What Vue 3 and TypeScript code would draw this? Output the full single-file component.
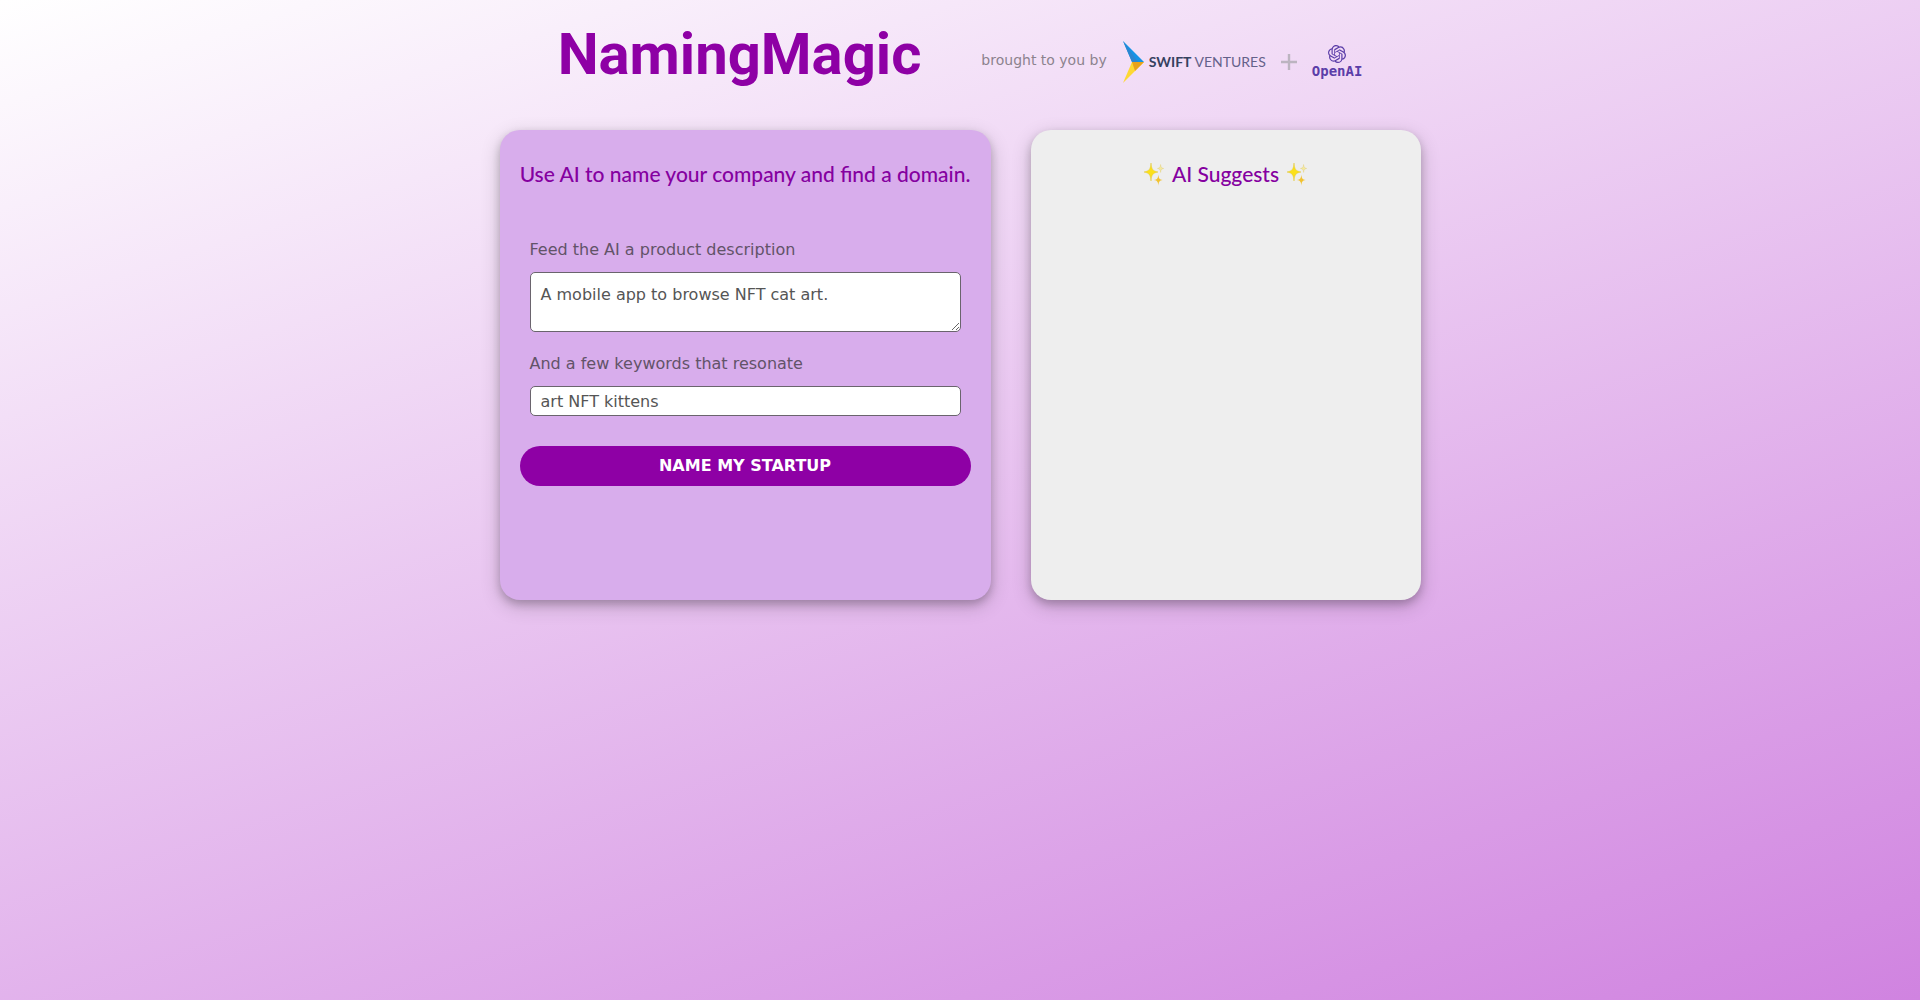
<script setup lang="ts">
import { ref } from 'vue'

const description = ref('A mobile app to browse NFT cat art.')
const keywords = ref('art NFT kittens')
const sparkle = 'M7 0C7.600 6 8.500 8 14 9C8.500 10 7.600 12 7 18C6.400 12 5.500 10 0 9C5.500 8 6.400 6 7 0Z'
</script>

<template>
  <div class="page">
    <header class="header">
      <h1 class="title">NamingMagic</h1>
      <div class="sponsors">
        <span class="by">brought to you by</span>
        <a class="swift" href="#" aria-label="Swift Ventures">
          <svg width="21" height="42" viewBox="0 0 21 42" aria-hidden="true">
            <path d="M0 0L21 21H9Z" fill="#1593e6" />
            <path d="M0 0L15 21H9Z" fill="#2b86d0" />
            <path d="M9 21H21L0 42Z" fill="#fdd835" />
            <path d="M9 21H21L12 30Z" fill="#e8a21c" />
          </svg>
          <span class="swift-name"><b>SWIFT</b><span>VENTURES</span></span>
        </a>
        <svg class="plus" width="16" height="16" viewBox="0 0 16 16" aria-hidden="true">
          <path d="M8 0V16M0 8H16" stroke="#bcb4c0" stroke-width="2.400" />
        </svg>
        <a class="openai" href="#">
          <svg width="18" height="18" viewBox="0 0 24 24" fill="#5b3da8" aria-hidden="true">
            <path d="M22.2819 9.8211a5.9847 5.9847 0 0 0-.5157-4.9108 6.0462 6.0462 0 0 0-6.5098-2.9A6.0651 6.0651 0 0 0 4.9807 4.1818a5.9847 5.9847 0 0 0-3.9977 2.9 6.0462 6.0462 0 0 0 .7427 7.0966 5.98 5.98 0 0 0 .511 4.9107 6.051 6.051 0 0 0 6.5146 2.9001A5.9847 5.9847 0 0 0 13.2599 24a6.0557 6.0557 0 0 0 5.7718-4.2058 5.9894 5.9894 0 0 0 3.9977-2.9001 6.0557 6.0557 0 0 0-.7475-7.0729zm-9.022 12.6081a4.4755 4.4755 0 0 1-2.8764-1.0408l.1419-.0804 4.7783-2.7582a.7948.7948 0 0 0 .3927-.6813v-6.7369l2.02 1.1686a.071.071 0 0 1 .038.052v5.5826a4.504 4.504 0 0 1-4.4945 4.4944zm-9.6607-4.1254a4.4708 4.4708 0 0 1-.5346-3.0137l.142.0852 4.783 2.7582a.7712.7712 0 0 0 .7806 0l5.8428-3.3685v2.3324a.0804.0804 0 0 1-.0332.0615L9.74 19.9502a4.4992 4.4992 0 0 1-6.1408-1.6464zM2.3408 7.8956a4.485 4.485 0 0 1 2.3655-1.9728V11.6a.7664.7664 0 0 0 .3879.6765l5.8144 3.3543-2.0201 1.1685a.0757.0757 0 0 1-.071 0l-4.8303-2.7865A4.504 4.504 0 0 1 2.3408 7.872zm16.5963 3.8558L13.1038 8.364 15.1192 7.2a.0757.0757 0 0 1 .071 0l4.8303 2.7913a4.4944 4.4944 0 0 1-.6765 8.1042v-5.6772a.79.79 0 0 0-.407-.667zm2.0107-3.0231l-.142-.0852-4.7735-2.7818a.7759.7759 0 0 0-.7854 0L9.409 9.2297V6.8974a.0662.0662 0 0 1 .0284-.0615l4.8303-2.7866a4.4992 4.4992 0 0 1 6.6802 4.66zM8.3065 12.863l-2.02-1.1638a.0804.0804 0 0 1-.038-.0567V6.0742a4.4992 4.4992 0 0 1 7.3757-3.4537l-.142.0805L8.704 5.459a.7948.7948 0 0 0-.3927.6813zm1.0976-2.3654l2.602-1.4998 2.6069 1.4998v2.9994l-2.5974 1.4997-2.6067-1.4997Z" />
          </svg>
          <span>OpenAI</span>
        </a>
      </div>
    </header>

    <main class="cards">
      <form class="card form-card" @submit.prevent>
        <h2 class="heading">Use AI to name your company and find a domain.</h2>
        <div class="fields">
          <label for="description">Feed the AI a product description</label>
          <textarea id="description" v-model="description"></textarea>
          <label for="keywords">And a few keywords that resonate</label>
          <input id="keywords" v-model="keywords" type="text" />
        </div>
        <button class="submit" type="submit">NAME MY STARTUP</button>
      </form>

      <section class="card results-card">
        <h2 class="heading">
          <svg v-for="side in ['start', 'end']" :key="side" :class="['sparkles', side]" viewBox="0 0 20 23" aria-hidden="true">
            <path :d="sparkle" fill="#fbe01a" stroke="#e0c63a" stroke-width="0.500" />
            <path :d="sparkle" fill="#f2c230" transform="translate(10 11.500) scale(0.620)" />
            <path :d="sparkle" fill="#f3e9a0" stroke="#e3cf78" transform="translate(13.500 1.500) scale(0.440)" />
          </svg>
          <span class="heading-text">AI Suggests</span>
        </h2>
      </section>
    </main>
  </div>
</template>

<style>
body {
  margin: 0;
}
</style>

<style scoped>
.page {
  box-sizing: border-box;
  min-height: 100vh;
  background: linear-gradient(162deg, #ffffff, #d083e0);
  font-family: "DejaVu Sans", sans-serif;
  font-size: 16px;
}
.header {
  display: flex;
  justify-content: center;
  align-items: center;
  gap: 60px;
  height: 130px;
  padding-bottom: 6px;
  box-sizing: border-box;
}
.title {
  margin: 0;
  padding-bottom: 16px;
  color: #8e00a5;
  font: 700 58px/68px Roboto, sans-serif;
}
.sponsors {
  display: flex;
  align-items: center;
}
.by {
  margin-right: 16px;
  padding-bottom: 4px;
  color: #8c838e;
  font-size: 14px;
}
.swift {
  display: flex;
  align-items: center;
  gap: 5px;
  text-decoration: none;
}
.swift-name {
  display: flex;
  gap: 3px;
  color: #64618a;
  font: 400 14px/20px Lato, sans-serif;
}
.swift-name b {
  color: #35415f;
  font-weight: 700;
}
.plus {
  margin: 0 15px;
}
.openai {
  display: flex;
  flex-direction: column;
  align-items: center;
  color: #5b3da8;
  font: 700 14px/16px "DejaVu Sans Mono", monospace;
  text-decoration: none;
}
.cards {
  display: flex;
  flex-wrap: wrap;
  justify-content: center;
  gap: 40px;
}
.card {
  box-sizing: border-box;
  min-height: 470px;
  padding: 30px 20px;
  border-radius: 20px;
  box-shadow: 0 4px 8px rgba(0, 0, 0, 0.2), 0 6px 20px rgba(0, 0, 0, 0.19);
}
.form-card {
  width: 491px;
  background: #d8adec;
}
.results-card {
  width: 390px;
  background: #eeeeee;
}
.heading {
  display: flex;
  justify-content: center;
  align-items: center;
  gap: 8px;
  margin: 0 0 52px;
  color: #8500a0;
  font: 500 21px/28px Lato, sans-serif;
  white-space: nowrap;
}
.sparkles {
  width: 20px;
  height: 23px;
}
.end {
  order: 1;
}
.fields {
  display: flex;
  flex-direction: column;
  padding: 0 10px;
}
label {
  margin-bottom: 12px;
  color: #625368;
  line-height: 20px;
}
textarea,
input {
  box-sizing: border-box;
  width: 100%;
  border: 1px solid #6a646d;
  border-radius: 5px;
  background: #ffffff;
  color: #555555;
  font: 16px/20px "DejaVu Sans", sans-serif;
}
textarea {
  height: 60px;
  margin-bottom: 22px;
  padding: 12px 10px;
}
input {
  height: 30px;
  padding: 0 10px;
}
.submit {
  width: 100%;
  height: 40px;
  margin-top: 30px;
  padding: 0;
  border: 0;
  border-radius: 20px;
  background: #8e00a5;
  color: #ffffff;
  font: 700 16px/20px "DejaVu Sans", sans-serif;
}
</style>
